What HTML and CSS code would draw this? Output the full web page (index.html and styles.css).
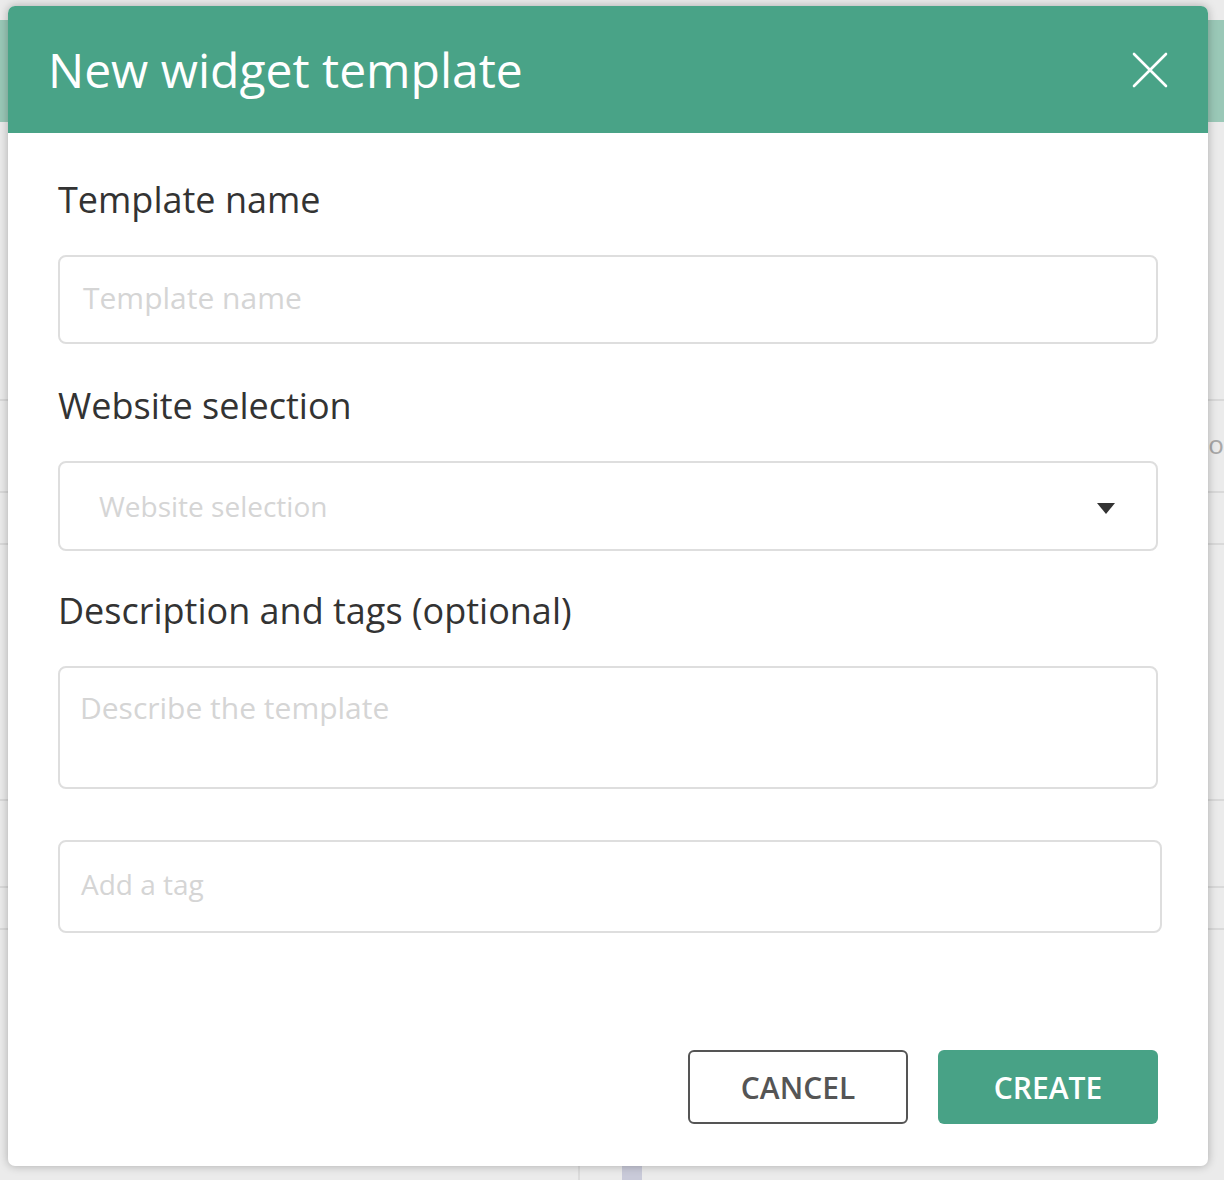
FILE: index.html
```html
<!DOCTYPE html>
<html>
<head>
<meta charset="utf-8">
<link rel="stylesheet" href="styles.css">
</head>
<body>
<div class="backdrop">
  <div class="bg-gap-top"></div>
  <div class="bg-bar"></div>
  <div class="bg-row r1"></div>
  <div class="bg-row r2"><span class="bg-text">o</span></div>
  <div class="bg-row r3"></div>
  <div class="bg-row r4"></div>
  <div class="bg-row r5"></div>
  <div class="bg-row r6"></div>
  <div class="bg-row r7">
    <div class="bg-col"></div>
    <div class="bg-chip"></div>
  </div>
</div>

<div class="modal">
  <div class="modal-header">
    <h1 class="modal-title">New widget template</h1>
    <button class="close-btn" aria-label="Close">
      <svg width="36" height="36" viewBox="0 0 36 36"><path d="M2 2 L34 34 M34 2 L2 34" stroke="#fff" stroke-width="2.6" stroke-linecap="round"/></svg>
    </button>
  </div>
  <div class="modal-body">
    <label class="field-label">Template name</label>
    <div class="input name-input"><span class="ph">Template name</span></div>

    <label class="field-label">Website selection</label>
    <div class="input select-input">
      <span class="ph ph-sm">Website selection</span>
      <svg class="caret" width="18" height="11" viewBox="0 0 18 11"><path d="M0 0 H18 L9 11 Z" fill="#333"/></svg>
    </div>

    <label class="field-label">Description and tags (optional)</label>
    <div class="input textarea-input"><span class="ph">Describe the template</span></div>

    <div class="input tag-input"><span class="ph ph-sm">Add a tag</span></div>

    <div class="actions">
      <button class="btn btn-cancel">CANCEL</button>
      <button class="btn btn-create">CREATE</button>
    </div>
  </div>
</div>
</body>
</html>
```

FILE: styles.css
```css
html, body {
  margin: 0;
  padding: 0;
}
body {
  width: 1224px;
  height: 1180px;
  overflow: hidden;
  background: #ebebeb;
  font-family: "Open Sans", "DejaVu Sans", sans-serif;
  position: relative;
}

/* dimmed page behind the modal */
.backdrop {
  display: flex;
  flex-direction: column;
  height: 1180px;
}
.bg-gap-top { height: 20px; }
.bg-bar { height: 102px; background: #9ac8b7; }
.bg-row { border-bottom: 2px solid #d9d9d9; position: relative; }
.r1 { height: 277px; }
.r2 { height: 90px; }
.r3 { height: 50px; }
.r4 { height: 254px; }
.r5 { height: 85px; }
.r6 { height: 40px; }
.r7 { flex: 1; border-bottom: none; display: flex; }
.bg-text {
  position: absolute;
  right: 0;
  top: 30px;
  font-size: 26px;
  color: #a8a8a8;
  line-height: 1;
}
.bg-col { width: 578px; border-right: 2px solid #dcdcdc; }
.bg-chip { width: 20px; margin-left: 42px; background: #c9cad9; }

/* modal */
.modal {
  position: absolute;
  left: 8px;
  top: 6px;
  width: 1200px;
  height: 1160px;
  background: #fff;
  border-radius: 7px;
  overflow: hidden;
  box-shadow: 0 0 10px rgba(0, 0, 0, 0.28);
  display: flex;
  flex-direction: column;
}
.modal-header {
  height: 127px;
  flex: none;
  background: #49a387;
  display: flex;
  align-items: center;
  justify-content: space-between;
  padding: 0 40px 0 40px;
}
.modal-title {
  margin: 0;
  color: #fff;
  font-weight: 400;
  font-size: 48px;
  line-height: 1;
}
.close-btn {
  background: none;
  border: none;
  padding: 0;
  width: 36px;
  height: 36px;
  display: block;
}
.close-btn svg { display: block; }

.modal-body {
  flex: 1;
  padding: 44px 50px 42px 50px;
  display: flex;
  flex-direction: column;
}
.field-label {
  display: block;
  font-size: 36px;
  line-height: 46px;
  color: #333;
  margin-bottom: 32px;
}
.input {
  box-sizing: border-box;
  border: 2px solid #dedede;
  border-radius: 8px;
  display: flex;
  align-items: center;
  position: relative;
}
.ph {
  color: #d5d5d5;
  font-size: 30px;
  line-height: 1;
}
.ph-sm {
  font-size: 28px;
}
.name-input {
  height: 89px;
  padding-left: 23px;
  padding-bottom: 3px;
  margin-bottom: 39px;
}
.select-input {
  height: 90px;
  padding-left: 39px;
  margin-bottom: 37px;
}
.caret {
  position: absolute;
  right: 41px;
  top: 40px;
}
.textarea-input {
  height: 123px;
  align-items: flex-start;
  padding-left: 20px;
  padding-top: 25px;
  margin-bottom: 51px;
}
.tag-input {
  height: 93px;
  width: 1104px;
  padding-left: 21px;
  padding-bottom: 6px;
}
.actions {
  margin-top: auto;
  display: flex;
  justify-content: flex-end;
  gap: 30px;
}
.btn {
  width: 220px;
  height: 74px;
  border-radius: 6px;
  font-family: "Open Sans", "DejaVu Sans", sans-serif;
  font-size: 30px;
  font-weight: 600;
  box-sizing: border-box;
  padding: 0;
}
.btn-cancel {
  background: #fff;
  border: 2px solid #555;
  color: #555;
}
.btn-create {
  background: #48a286;
  border: none;
  color: #fff;
}
```
